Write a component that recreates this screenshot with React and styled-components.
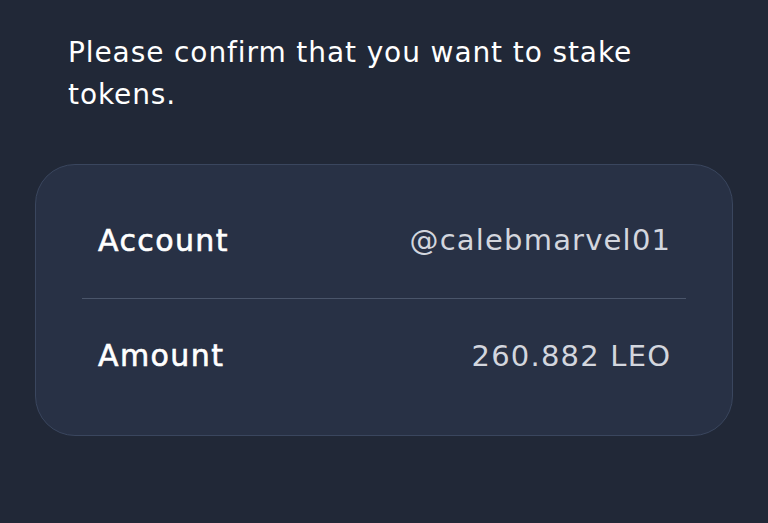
import React from 'react'
import styled, { createGlobalStyle } from 'styled-components'

const GlobalStyle = createGlobalStyle`
    html, body {
        margin: 0;
        padding: 0;
        background: #212837;
    }
    body {
        font-family: "DejaVu Sans", Inter, sans-serif;
        -webkit-font-smoothing: antialiased;
    }
`

const Page = styled.div`
    width: 768px;
    height: 523px;
    box-sizing: border-box;
    padding: 32px 35px 0;
    background: #212837;
`

const Message = styled.p`
    margin: 0;
    padding: 0 90px 0 33px;
    color: #ffffff;
    font-size: 28px;
    line-height: 42px;
    font-weight: 400;
    letter-spacing: 0.9px;
`

const Card = styled.div`
    margin-top: 48px;
    box-sizing: border-box;
    height: 272px;
    padding: 18px 46px 22px;
    border: 1.5px solid #3a465e;
    border-radius: 40px;
    background: #283145;
    display: flex;
    flex-direction: column;
`

const Row = styled.div`
    flex: 1;
    display: flex;
    align-items: center;
    justify-content: space-between;
    padding: 0 16px;
    border-top: ${(p) => (p.divided ? '1.5px solid #4a556a' : 'none')};
`

const Label = styled.span`
    color: #ffffff;
    font-size: 30px;
    font-weight: 400;
    letter-spacing: 1.4px;
    -webkit-text-stroke: 0.6px #ffffff;
`

const Value = styled.span`
    color: #d3d6de;
    font-size: 29px;
    font-weight: 400;
    letter-spacing: 1.2px;
    margin-right: -1.2px;
`

const rows = [
    { label: 'Account', value: '@calebmarvel01' },
    { label: 'Amount', value: '260.882 LEO' },
]

const App = () => {
    return (
        <Page>
            <GlobalStyle />
            <Message>Please confirm that you want to stake tokens.</Message>
            <Card>
                {rows.map((row, i) => (
                    <Row key={row.label} divided={i > 0}>
                        <Label>{row.label}</Label>
                        <Value>{row.value}</Value>
                    </Row>
                ))}
            </Card>
        </Page>
    )
}

export default App
